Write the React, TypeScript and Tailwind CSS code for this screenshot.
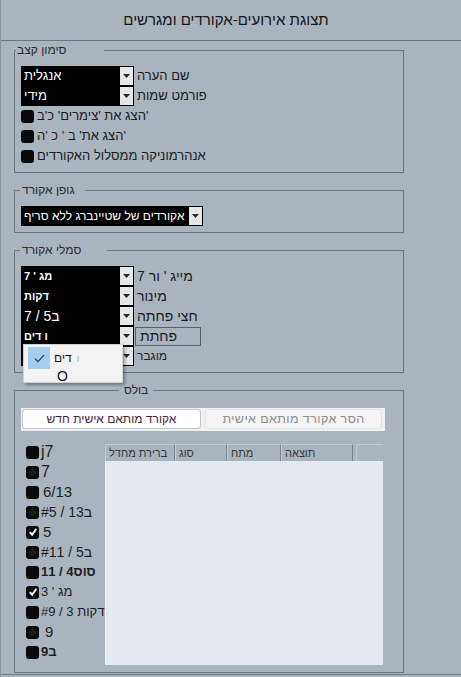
import React from "react";

// texts are right-to-left runs laid at the left of their box; the chord
// symbols that start with a number are drawn left to right.
// Words stay in one bidi run, so splitting them into spans changes nothing on screen.
function V({ t, className = "", ltr }: { t: string; className?: string; ltr?: boolean }) {
  const words = t.split(/( +)/).filter((p) => p !== "");
  return (
    <span dir={ltr ? "ltr" : "rtl"} className={`whitespace-pre ${className}`}>
      {words.map((w, i) => (/^ +$/.test(w) ? w : <span key={i}>{w}</span>))}
    </span>
  );
}

function Combo({
  text,
  width = "w-[113px]",
  textCls = "text-[13px]",
  ltr,
}: {
  text: string;
  width?: string;
  textCls?: string;
  ltr?: boolean;
}) {
  return (
    <div className={`flex h-[20px] shrink-0 bg-black p-[1px] ${width}`}>
      <div className={`flex-1 overflow-hidden pl-[2px] leading-[18px] text-white ${textCls}`}>
        <V t={text} ltr={ltr} />
      </div>
      <div className="flex w-[13px] shrink-0 items-center justify-center bg-[#e6e7e9]">
        <svg width="7" height="4" viewBox="0 0 7 4">
          <path d="M0 0h7L3.5 4z" fill="#2a2a2a" />
        </svg>
      </div>
    </div>
  );
}

function Box({ checked, dot }: { checked?: boolean; dot?: boolean }) {
  return (
    <span className="flex h-[13px] w-[13px] shrink-0 items-center justify-center rounded-[3px] bg-[#0a0a0a]">
      {checked && (
        <svg width="10" height="10" viewBox="0 0 10 10">
          <path d="M1.8 5.2l2.3 2.5L8.4 1.8" stroke="white" strokeWidth="1.9" fill="none" />
        </svg>
      )}
      {dot && <span className="h-[7px] w-[7px] rounded-full bg-[#1c1c1c]" />}
    </span>
  );
}

function Group({
  legend,
  legendCls,
  className = "",
  children,
}: {
  legend: string;
  legendCls: string;
  className?: string;
  children: React.ReactNode;
}) {
  return (
    <fieldset className={`w-[390px] border border-[#6b7581] ${className}`}>
      <legend className={`text-[12px] leading-[14px] text-[#2b2b2b] ${legendCls}`}>
        <V t={legend} />
      </legend>
      {children}
    </fieldset>
  );
}

const CHORD_ROWS = [
  { combo: "מג ' 7", comboCls: "text-[11px] font-bold", label: "מייג ' ור 7", labelCls: "text-[14px]" },
  { combo: "דקות", comboCls: "text-[11px] font-bold", label: "מינור", labelCls: "text-[14px]" },
  { combo: "7 / 5ב", comboCls: "text-[14px]", label: "חצי פחתה", labelCls: "text-[14px]", ltr: true },
  { combo: "ו דים", comboCls: "text-[11px] font-bold", label: "פחתת", labelCls: "text-[14px]", boxed: true },
  { combo: "+", comboCls: "text-[12px]", label: "מוגבר", labelCls: "text-[12px]" },
];

const TENSIONS = [
  { t: "j7", cls: "text-[16px]" },
  { t: "7", cls: "text-[16px]", dot: true },
  { t: "6/13", cls: "text-[15px] pl-[2px]" },
  { t: "#5 / 13ב", cls: "text-[14px]", dot: true },
  { t: "5", cls: "text-[15px] pl-[2px]", checked: true },
  { t: "#11 / 5ב", cls: "text-[14px]", dot: true },
  { t: "11 / 4סוס", cls: "text-[13px] font-bold" },
  { t: "3 ' מג", cls: "text-[13px]", checked: true },
  { t: "#9 / 3 דקות", cls: "text-[13px]" },
  { t: "9", cls: "text-[15px] pl-[4px]", dot: true },
  { t: "9ב", cls: "text-[13px] font-bold" },
];

const COLUMNS = [
  { t: "ברירת מחדל", w: "w-[70px]" },
  { t: "סוג", w: "w-[52px]" },
  { t: "מתח", w: "w-[54px]" },
  { t: "תוצאה", w: "w-[72px]" },
];

export default function App() {
  return (
    <div className="relative h-[677px] w-[461px] overflow-hidden border-l border-[#8d97a2] bg-[#aab4bf] font-['Liberation_Sans','Noto_Sans',sans-serif] text-[#1b1b1b]">
      {/* title */}
      <div className="flex h-[41px] items-center justify-center border-b border-[#6b7480] pr-[10px] text-[15px] text-[#151515]">
        <V t="תצוגת אירועים-אקורדים ומגרשים" />
      </div>

      <div className="pl-[13px]">
        {/* note spelling */}
        <Group legend="סימון קצב" legendCls="ml-[1px] w-[88px] pl-[1px]" className="mt-[2px]">
          <div className="pb-[6px] pl-[6px] pt-[9px]">
            <div className="flex items-center">
              <Combo text="אנגלית" />
              <V t="שם הערה" className="ml-[3px] text-[13px]" />
            </div>
            <div className="flex items-center">
              <Combo text="מידי" />
              <V t="פורמט שמות" className="ml-[3px] text-[13px]" />
            </div>
            {["'הצג את 'צימרים' כ'ב", "'הצג את' ב ' כ 'ה", "אנהרמוניקה ממסלול האקורדים"].map((t) => (
              <div key={t} className="flex h-[20px] items-center">
                <Box />
                <V t={t} className="ml-[3px] text-[13px]" />
              </div>
            ))}
          </div>
        </Group>

        {/* chord font */}
        <Group legend="גופן אקורד" legendCls="ml-[5px] w-[65px] pl-[2px]" className="mt-[10px]">
          <div className="pb-[6px] pl-[6px] pt-[9px]">
            <Combo text="אקורדים של שטיינברג ללא סריף" width="w-[182px]" textCls="text-[12px]" />
          </div>
        </Group>

        {/* chord symbols */}
        <Group legend="סמלי אקורד" legendCls="ml-[5px] w-[87px] pl-[2px]" className="mt-[10px]">
          <div className="pb-[6px] pl-[6px] pt-[9px]">
            {CHORD_ROWS.map((r) => (
              <div key={r.label} className="flex h-[20px] items-center">
                <Combo text={r.combo} textCls={r.comboCls} ltr={r.ltr} />
                {r.boxed ? (
                  <div className="ml-[1px] flex h-[19px] w-[66px] items-center border border-[#56606b] pl-[4px]">
                    <V t={r.label} className={r.labelCls} />
                  </div>
                ) : (
                  <V t={r.label} className={`ml-[3px] ${r.labelCls}`} />
                )}
              </div>
            ))}
          </div>
        </Group>

        {/* custom chords */}
        <Group legend="בולס" legendCls="ml-[104px] w-[34px] pl-[5px]" className="mt-[10px]">
          <div className="pb-[7px] pl-[6px] pt-[11px]">
            <div className="flex h-[23px] w-[364px] items-start gap-[4px] bg-[#eef0f3] pl-[1px] pt-[1px]">
              <button className="flex h-[20px] w-[179px] items-center justify-center rounded-[3px] border border-[#c6c6c6] bg-white text-[12px] text-[#4a1d42]">
                <V t="אקורד מותאם אישית חדש" />
              </button>
              <button className="flex h-[20px] w-[177px] items-center justify-center rounded-[3px] border border-[#e3e3e3] bg-[#f4f4f4] text-[12.5px] tracking-[0.4px] text-[#8e8e8e]">
                <V t="הסר אקורד מותאם אישית" />
              </button>
            </div>

            <div className="mt-[11px] flex items-start">
              <div className="w-[84px] pl-[5px]">
                {TENSIONS.map((x) => (
                  <div key={x.t} className="flex h-[20px] items-center">
                    <Box checked={x.checked} dot={x.dot} />
                    <V t={x.t} ltr className={`ml-[2px] text-[#1e1e1e] ${x.cls}`} />
                  </div>
                ))}
              </div>

              <div className="mt-[2px] w-[278px]">
                <div className="flex h-[17px] text-[11px] text-[#383838]">
                  {COLUMNS.map((c) => (
                    <div
                      key={c.t}
                      className={`flex items-center border-r border-t border-l border-r-[#7b8590] border-t-[#c3cad2] border-l-[#c3cad2] pl-[3px] ${c.w}`}
                    >
                      <V t={c.t} />
                    </div>
                  ))}
                  <div className="ml-[3px] flex-1 border-l border-t border-[#c3cad2]" />
                </div>
                <div className="h-[204px] border-l border-[#eef2f7] bg-[#e3e9f1]" />
              </div>
            </div>
          </div>
        </Group>
      </div>

      <div className="mt-[1px] h-[1px] bg-[#6f7884]" />

      {/* open drop-down list */}
      <div className="absolute left-[22px] top-[344px] h-[39px] w-[100px] border border-[#cfd2d6] bg-[#f3f3f3] shadow-[2px_2px_3px_rgba(0,0,0,0.35)]">
        <div className="ml-[4px] mt-[2px] flex h-[22px] items-center">
          <div className="flex h-[22px] w-[22px] items-center justify-center bg-[#a5cdef]">
            <svg width="11" height="9" viewBox="0 0 11 9">
              <path d="M1 4.6l3 3L10 1.2" stroke="#1d3d5e" strokeWidth="1.2" fill="none" />
            </svg>
          </div>
          <V t="דים" className="ml-[4px] text-[12px] text-[#111]" />
          <span className="ml-[5px] text-[10px] text-[#b0b0b0]">ו</span>
        </div>
        <div className="ml-[33px] text-[14px] leading-[14px] text-[#111]">O</div>
      </div>
    </div>
  );
}
